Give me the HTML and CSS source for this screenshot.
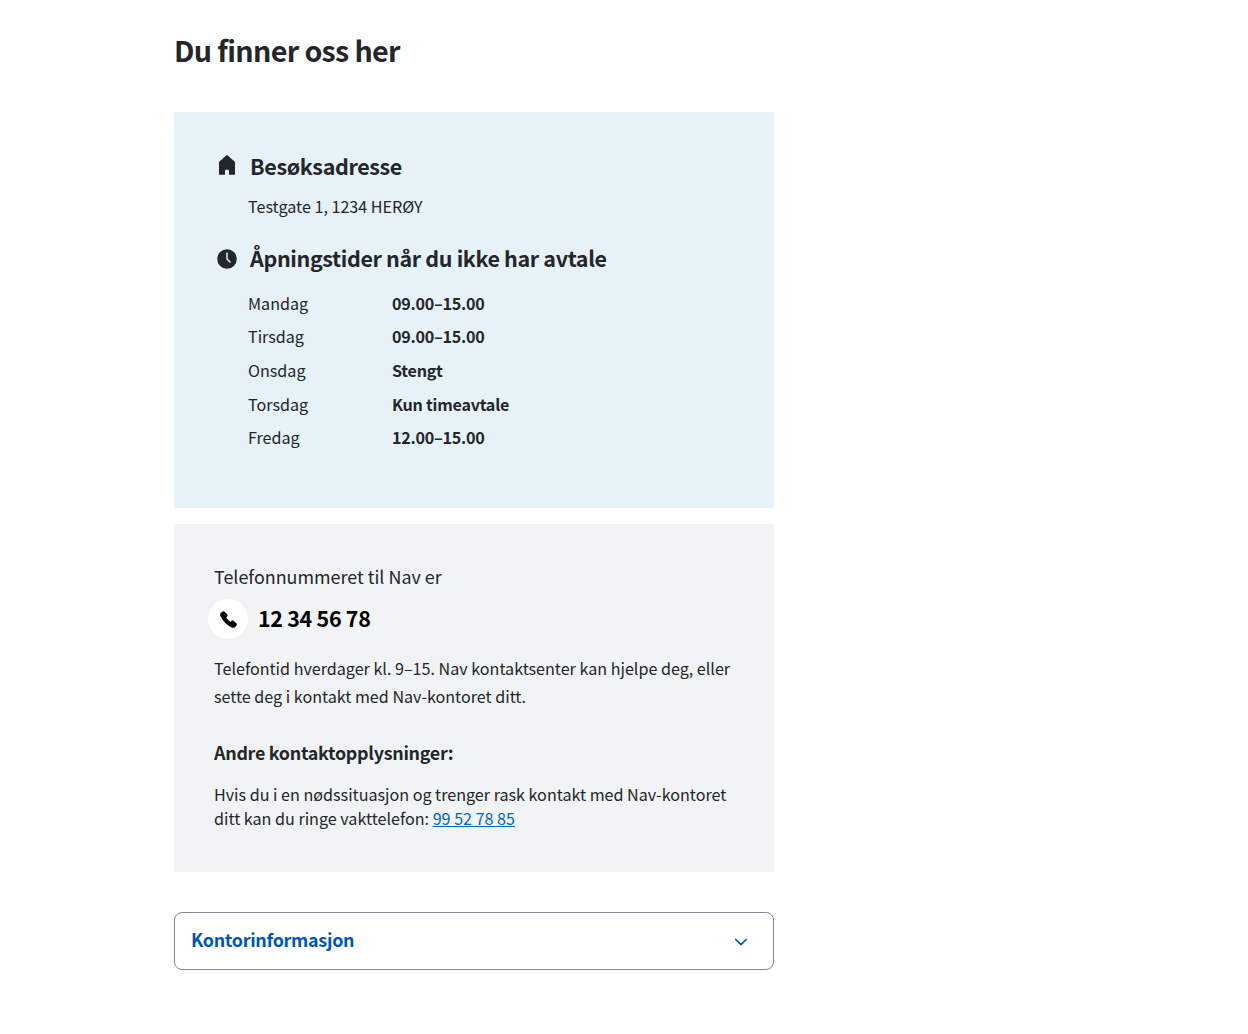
FILE: index.html
```html
<!DOCTYPE html>
<html lang="no">
<head>
<meta charset="utf-8">
<title>Du finner oss her</title>
<link rel="stylesheet" href="styles.css">
</head>
<body>
<main class="page">
  <h1 class="title">Du finner oss her</h1>

  <section class="card visit">
    <div class="heading-row">
      <svg class="icon icon-home" width="24" height="24" viewBox="0 0 24 24" aria-hidden="true"><path fill="currentColor" d="M12.500 2.200a.75.75 0 0 0-1 0L4 8.900V21.200Q4 21.700 4.500 21.700H10V17.500Q10 16.700 10.800 16.700H13.200Q14 16.700 14 17.500V21.700H19.500Q20 21.700 20 21.200V8.900z"/></svg>
      <h2 class="heading">Besøksadresse</h2>
    </div>
    <p class="text address">Testgate 1, 1234 HERØY</p>
    <div class="heading-row">
      <svg class="icon icon-clock" width="24" height="24" viewBox="0 0 24 24" aria-hidden="true"><path fill="currentColor" fill-rule="evenodd" d="M12 2.25a9.75 9.75 0 1 0 0 19.5 9.75 9.75 0 0 0 0-19.5M12.75 6a.75.75 0 0 0-1.5 0v6c0 .2.08.4.22.53l3 3a.75.75 0 1 0 1.06-1.06l-2.78-2.78z"/></svg>
      <h2 class="heading">Åpningstider når du ikke har avtale</h2>
    </div>
    <dl class="hours">
      <dt>Mandag</dt><dd>09.00–15.00</dd>
      <dt>Tirsdag</dt><dd>09.00–15.00</dd>
      <dt>Onsdag</dt><dd>Stengt</dd>
      <dt>Torsdag</dt><dd>Kun timeavtale</dd>
      <dt>Fredag</dt><dd>12.00–15.00</dd>
    </dl>
  </section>

  <section class="card contact">
    <p class="lead">Telefonnummeret til Nav er</p>
    <div class="phone">
      <span class="phone-badge"><svg width="24" height="24" viewBox="0 0 24 24" aria-hidden="true"><path fill="currentColor" d="M8 4a1.900 1.900 0 0 0-2.700 0L4 5.300c-.7.8-.9 1.900-.5 2.900 2.300 5.700 6.600 10 12.300 12.300 1 .4 2.100.2 2.900-.5l1.500-1.400a1.900 1.900 0 0 0 0-2.700l-2.600-2.400a1.900 1.900 0 0 0-2.600 0l-1.100 1-4.400-4.400 1-1.100a1.900 1.900 0 0 0 0-2.600z"/></svg></span>
      <span class="phone-number">12 34 56 78</span>
    </div>
    <p class="text">Telefontid hverdager kl. 9–15. Nav kontaktsenter kan hjelpe deg, eller<br>sette deg i kontakt med Nav-kontoret ditt.</p>
    <h3 class="subheading">Andre kontaktopplysninger:</h3>
    <p class="text emergency">Hvis du i en nødssituasjon og trenger rask kontakt med Nav-kontoret<br>ditt kan du ringe vakttelefon: <a class="link" href="#">99 52 78 85</a></p>
  </section>

  <button class="expander" type="button">
    <span class="expander-label">Kontorinformasjon</span>
    <svg class="chevron" width="24" height="24" viewBox="0 0 24 24" aria-hidden="true"><path fill="none" stroke="currentColor" stroke-width="1.7" stroke-linecap="round" stroke-linejoin="round" d="M6.700 9.500 12 14.700l5.300-5.200"/></svg>
  </button>
</main>
</body>
</html>
```
FILE: styles.css
```css
* { box-sizing: border-box; }
body {
  margin: 0;
  background: #fff;
  color: #23262a;
  font-family: "Noto Sans CJK SC", "Noto Sans", sans-serif;
}
h1, h2, h3, p, dl, dd { margin: 0; }
.page { width: 600px; margin-left: 174px; padding-top: 30px; }
.title { font-size: 28.65px; line-height: 40px; font-weight: 700; letter-spacing: -0.65px; white-space: nowrap; }
.card { border-radius: 2px; }
.visit { height: 396px; margin-top: 42px; padding: 38px 40px 0 41px; background: #e6f1f8; }
.heading-row { display: flex; align-items: center; gap: 11px; height: 32px; }
.icon { flex: none; }
.icon-home { margin-top: -3px; }
.icon-clock { margin-top: 1px; }
.heading { font-size: 21.5px; line-height: 32px; font-weight: 700; letter-spacing: -0.37px; white-space: nowrap; }
.text { font-size: 16.12px; line-height: 28px; white-space: nowrap; }
.address { margin: 10px 0 22px 33px; }
.hours {
  display: grid;
  grid-template-columns: 144px 1fr;
  grid-auto-rows: 33.6px;
  margin: 12.8px 0 0 33px;
  font-size: 16.12px;
  line-height: 33.6px;
}
.hours dd { font-weight: 700; letter-spacing: -0.25px; }
.contact { height: 348px; margin-top: 16px; padding: 38px 0 0 40px; background: #f2f3f5; }
.lead { font-size: 17.9px; line-height: 28px; }
.phone { display: flex; align-items: center; gap: 10px; margin: 9px 0 15px -6px; color: #000; }
.phone-badge {
  display: flex;
  align-items: center;
  justify-content: center;
  width: 40px;
  height: 40px;
  border-radius: 50%;
  background: #fff;
}
.phone-badge svg { width: 23px; height: 23px; }
.phone-number { font-size: 21.5px; line-height: 36px; font-weight: 700; letter-spacing: -0.33px; padding-bottom: 3px; }
.subheading { margin-top: 28px; font-size: 17.9px; line-height: 28px; font-weight: 700; letter-spacing: -0.28px; }
.emergency { margin-top: 16px; line-height: 24px; }
.link { color: #0067c5; text-decoration: underline; text-decoration-thickness: 1px; text-underline-offset: 1px; }
.expander {
  display: flex;
  align-items: center;
  justify-content: space-between;
  width: 600px;
  height: 58px;
  margin-top: 40px;
  padding: 0 20px 0 16px;
  border: 1px solid #818997;
  border-radius: 8px;
  background: #fff;
  color: #0056b4;
  font-family: inherit;
}
.expander-label { font-size: 17.9px; line-height: 28px; font-weight: 700; letter-spacing: -0.28px; padding-bottom: 5px; }
.chevron { margin-top: 1px; }
```
